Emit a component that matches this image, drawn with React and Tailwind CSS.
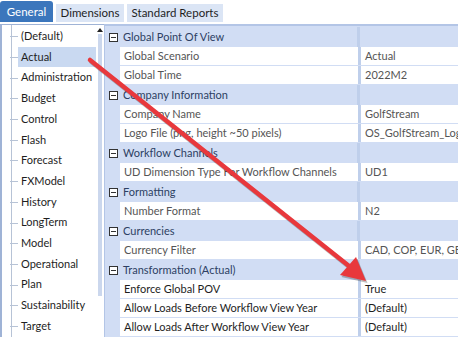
import React from "react";

const treeItems = [
  "(Default)",
  "Actual",
  "Administration",
  "Budget",
  "Control",
  "Flash",
  "Forecast",
  "FXModel",
  "History",
  "LongTerm",
  "Model",
  "Operational",
  "Plan",
  "Sustainability",
  "Target",
];

const sections = [
  {
    title: "Global Point Of View",
    rows: [
      ["Global Scenario", "Actual"],
      ["Global Time", "2022M2"],
    ],
  },
  {
    title: "Company Information",
    rows: [
      ["Company Name", "GolfStream"],
      ["Logo File (png, height ~50 pixels)", "OS_GolfStream_Logo.png"],
    ],
  },
  {
    title: "Workflow Channels",
    rows: [["UD Dimension Type For Workflow Channels", "UD1"]],
  },
  {
    title: "Formatting",
    rows: [["Number Format", "N2"]],
  },
  {
    title: "Currencies",
    rows: [["Currency Filter", "CAD, COP, EUR, GBP, USD"]],
  },
  {
    title: "Transformation (Actual)",
    rows: [
      ["Enforce Global POV", "True", true],
      ["Allow Loads Before Workflow View Year", "(Default)", true],
      ["Allow Loads After Workflow View Year", "(Default)", true],
    ],
  },
];

// collapse box in the grid gutter
const Minus = () => (
  <svg width="9" height="9" viewBox="0 0 9 9" className="shrink-0">
    <rect x="0.5" y="0.5" width="8" height="8" fill="#fff" stroke="#333" />
    <rect x="2" y="4" width="5" height="1" fill="#333" />
  </svg>
);

const App = () => {
  return (
    <div
      className="relative w-[458px] h-[337px] overflow-hidden bg-white text-[11px] text-[#1e1e1e] whitespace-nowrap"
      style={{ fontFamily: 'Lato, "Noto Sans", sans-serif' }}
    >
      {/* tabs */}
      <div className="flex items-end h-[22px] gap-[3px] text-[11.5px]">
        <div className="h-[21px] w-[53px] shrink-0 flex items-center justify-center bg-[#3b76bc] text-white rounded-t-[3px]">
          General
        </div>
        <div className="h-[18px] w-[68px] shrink-0 flex items-center justify-center bg-[#dbe5f5]">
          Dimensions
        </div>
        <div className="h-[18px] w-[96px] shrink-0 flex items-center justify-center bg-[#dbe5f5]">
          Standard Reports
        </div>
      </div>

      <div className="flex h-[315px] mt-[2px]">
        {/* tree panel */}
        <div className="relative flex w-[104px] shrink-0 border-l-2 border-t border-[#9fb3d6] bg-white">
          <div className="absolute left-[9px] top-0 bottom-0 w-px bg-[#b7c3d6]" />
          <div className="flex-1 pt-[1px]">
            {treeItems.map((name) => (
              <div key={name} className="relative flex items-center h-[20.7px]">
                <div className="absolute left-[8px] top-1/2 w-[8px] h-px bg-[#b7c3d6]" />
                <div
                  className={
                    "ml-[16px] pl-[3px] pr-1 h-full flex items-center flex-1 " +
                    (name === "Actual" ? "bg-[#c9d9f1]" : "")
                  }
                >
                  {name}
                </div>
              </div>
            ))}
          </div>
          <div className="w-[9px] flex flex-col items-center pt-[3px]">
            <div className="w-0 h-0 border-l-[3px] border-r-[3px] border-b-[4px] border-l-transparent border-r-transparent border-b-[#222]" />
            <div className="mt-[2px] w-[4px] h-[262px] bg-[#cbd7ed]" />
          </div>
        </div>

        {/* property grid */}
        <div className="flex-1 border-t-2 border-l border-[#b3c5e6] bg-[#d1ddf4] pt-[1px]">
          {sections.map((sec) => (
            <div key={sec.title}>
              <div className="flex items-center h-[20px]">
                <div className="w-[15px] shrink-0 flex justify-center pl-[2px]">
                  <Minus />
                </div>
                <div className="pl-[3px] w-[237px] shrink-0 text-[#2d3f63]">{sec.title}</div>
                <div className="w-[3px] shrink-0 h-full bg-[#bfcfeb]" />
              </div>
              {sec.rows.map(([k, v, dark]) => (
                <div key={k} className="flex h-[19px] pb-px">
                  <div className="w-[15px] shrink-0" />
                  <div
                    className={
                      "w-[238px] shrink-0 bg-white pl-[4px] flex items-center overflow-hidden " +
                      (dark ? "text-[#1e1e1e]" : "text-[#555]")
                    }
                  >
                    {k}
                  </div>
                  <div className="w-[3px] shrink-0 bg-[#bfcfeb]" />
                  <div
                    className={
                      "flex-1 min-w-0 bg-white pl-[4px] flex items-center overflow-hidden " +
                      (dark ? "text-[#1e1e1e]" : "text-[#555]")
                    }
                  >
                    {v}
                  </div>
                </div>
              ))}
            </div>
          ))}
        </div>
      </div>

      {/* red arrow overlay */}
      <svg className="absolute left-0 top-0 pointer-events-none" width="458" height="337">
        <g opacity="0.25" transform="translate(1.5,2)">
          <line x1="90" y1="60" x2="349" y2="266" stroke="#000" strokeWidth="4.5" strokeLinecap="round" />
          <polygon points="366,281 340,275 356,257" fill="#000" />
        </g>
        <line x1="90" y1="60" x2="349" y2="266" stroke="#e8383c" strokeWidth="4.5" strokeLinecap="round" />
        <polygon points="366,281 340,275 356,257" fill="#e8383c" />
      </svg>
    </div>
  );
};

export default App;
